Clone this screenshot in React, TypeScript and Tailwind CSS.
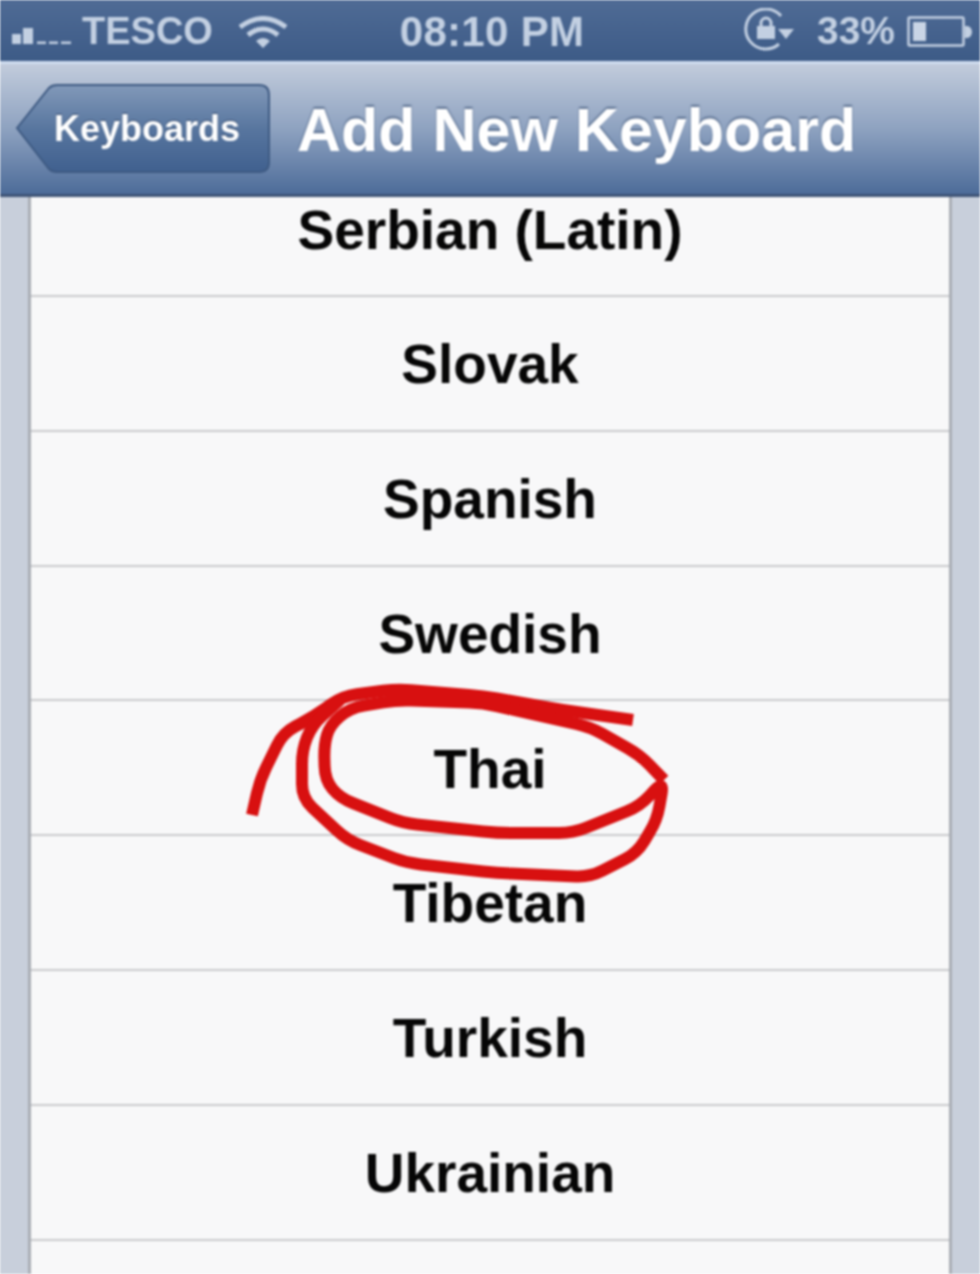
const ROWS = ["Slovak", "Spanish", "Swedish", "Thai", "Tibetan", "Turkish", "Ukrainian"];

const TAIL: number[][] = [[252, 815], [260, 780], [283, 733], [313, 717], [343, 696], [397, 689], [483, 696], [563, 710], [633, 720]];
const LOOP: number[][] = [
  [664, 780], [640, 755], [590, 727], [483, 703], [397, 700], [350, 708], [330, 725], [324, 745], [325, 780], [340, 798],
  [403, 823], [497, 833], [573, 833], [640, 806], [664, 780], [657, 820], [637, 853], [590, 877], [497, 873], [407, 863],
  [347, 840], [302, 798], [302, 750], [312, 725], [340, 700],
];

// rounds the corners of a hand drawn line, keeps the straight parts
function rounded(pts: number[][], r = 14) {
  let d = `M${pts[0][0]} ${pts[0][1]}`;
  for (let i = 1; i < pts.length - 1; i++) {
    const [x, y] = pts[i];
    const [ax, ay] = pts[i - 1];
    const [bx, by] = pts[i + 1];
    const la = Math.hypot(ax - x, ay - y);
    const lb = Math.hypot(bx - x, by - y);
    const ra = Math.min(r, la / 2);
    const rb = Math.min(r, lb / 2);
    d += ` L${x + ((ax - x) / la) * ra} ${y + ((ay - y) / la) * ra}`;
    d += ` Q${x} ${y} ${x + ((bx - x) / lb) * rb} ${y + ((by - y) / lb) * rb}`;
  }
  const last = pts[pts.length - 1];
  return `${d} L${last[0]} ${last[1]}`;
}

function SignalIcon() {
  return (
    <svg width="60" height="16" viewBox="0 0 60 16" fill="#c3d0e2">
      <rect x="0" y="6" width="9" height="10" />
      <rect x="11" y="0" width="10" height="16" />
      <rect x="25" y="13.5" width="9" height="2.5" />
      <rect x="37" y="13.5" width="9" height="2.5" />
      <rect x="49" y="13.5" width="10" height="2.5" />
    </svg>
  );
}

function WifiIcon() {
  return (
    <svg width="48" height="32" viewBox="0 0 48 32" fill="none" stroke="#c3d0e2" strokeWidth="5">
      <path d="M1 11 Q24 -6 47 11" />
      <path d="M9 19 Q24 7 39 19" />
      <path d="M24 32 L17 25 Q24 19 31 25 Z" fill="#c3d0e2" stroke="none" />
    </svg>
  );
}

function RotationLockIcon() {
  return (
    <svg width="52" height="48" viewBox="0 0 52 48" fill="none" stroke="#c3d0e2">
      <path d="M38 8 A20 20 0 1 0 36 36" strokeWidth="3" />
      <path d="M35 21 L51 21 L43 31 Z" fill="#c3d0e2" stroke="none" />
      <rect x="14" y="18" width="18" height="13" fill="#c3d0e2" stroke="none" />
      <path d="M18 19 V15 A5 5 0 0 1 28 15 V19" strokeWidth="3" />
    </svg>
  );
}

function BatteryIcon() {
  return (
    <svg width="65" height="32" viewBox="0 0 65 32" fill="none">
      <rect x="1.5" y="1.5" width="55" height="28" stroke="#c3d0e2" strokeWidth="2.5" rx="1" />
      <rect x="6" y="6" width="13" height="19" fill="#c9d5e6" />
      <path d="M58 10 H60 A5 6 0 0 1 60 22 H58 Z" fill="#c3d0e2" />
    </svg>
  );
}

function BackButton() {
  return (
    <div className="relative flex h-[90px] w-[255px] items-center pl-[39px]">
      <svg className="absolute inset-0" width="255" height="90" viewBox="0 0 255 90">
        <defs>
          <linearGradient id="back" x1="0" y1="0" x2="0" y2="1">
            <stop offset="0" stopColor="#8299b9" />
            <stop offset="0.5" stopColor="#58769f" />
            <stop offset="1" stopColor="#40608f" />
          </linearGradient>
        </defs>
        <path
          d="M2 44 L34 4 Q37 1 42 1 H244 Q254 1 254 11 V78 Q254 88 244 88 H42 Q37 88 34 85 Z"
          fill="url(#back)"
          stroke="#3e5a82"
          strokeWidth="2"
        />
      </svg>
      <span className="relative text-[36px] font-bold text-white [text-shadow:0_-1px_1px_#33496b]">Keyboards</span>
    </div>
  );
}

function Annotation() {
  return (
    <svg className="pointer-events-none absolute inset-0" width="980" height="1274" viewBox="0 0 980 1274" fill="none" stroke="#d81010" strokeWidth="12" strokeLinejoin="round">
      <path d={rounded(TAIL)} />
      <path d={rounded(LOOP)} />
    </svg>
  );
}

export default function App() {
  return (
    <div className="relative flex h-[1274px] w-[980px] flex-col overflow-hidden bg-[#c8cfdb] font-['Liberation_Sans',Arial,sans-serif] blur-[0.8px]">
      {/* Status bar */}
      <div className="grid h-[61px] grid-cols-3 items-center bg-gradient-to-b from-[#4f6b95] to-[#3d5b87] pr-[8px] pb-[2px] pl-[12px] text-[#c3d0e2]">
        <div className="flex items-center">
          <span className="mt-[9px]"><SignalIcon /></span>
          <span className="ml-[10px] text-[38px] font-bold">TESCO</span>
          <span className="ml-[26px]"><WifiIcon /></span>
        </div>
        <div className="text-center text-[42px] font-bold tracking-[0.3px] whitespace-nowrap">08:10 PM</div>
        <div className="flex items-center justify-end">
          <RotationLockIcon />
          <span className="ml-[22px] text-[39px] font-bold">33%</span>
          <span className="ml-[12px]"><BatteryIcon /></span>
        </div>
      </div>

      {/* Nav bar */}
      <div className="flex h-[136px] items-center gap-[27px] border-t-[3px] border-b-[3px] border-t-[#cfdcef] border-b-[#3e5476] bg-gradient-to-b from-[#c2ccdc] via-[#8ea2c0] to-[#4d6c99] pl-[15px]">
        <BackButton />
        <h1 className="pt-[3px] text-[61px] font-bold whitespace-nowrap text-white [text-shadow:0_-2px_2px_#5a6f8f]">Add New Keyboard</h1>
      </div>

      {/* List */}
      <div className="mx-[28px] flex-1 border-x-[3px] border-x-[#a9adb4] bg-[#f8f8f9] text-[55px] font-bold text-[#060606]">
        <div className="flex h-[100px] items-start justify-center border-b-2 border-b-[#c9cacd]">
          <span className="-mt-[8px]">Serbian (Latin)</span>
        </div>
        {ROWS.map((name) => (
          <div key={name} className="flex h-[134.8px] items-center justify-center border-b-2 border-b-[#c9cacd] pt-[2px]">
            {name}
          </div>
        ))}
      </div>

      <Annotation />
    </div>
  );
}
